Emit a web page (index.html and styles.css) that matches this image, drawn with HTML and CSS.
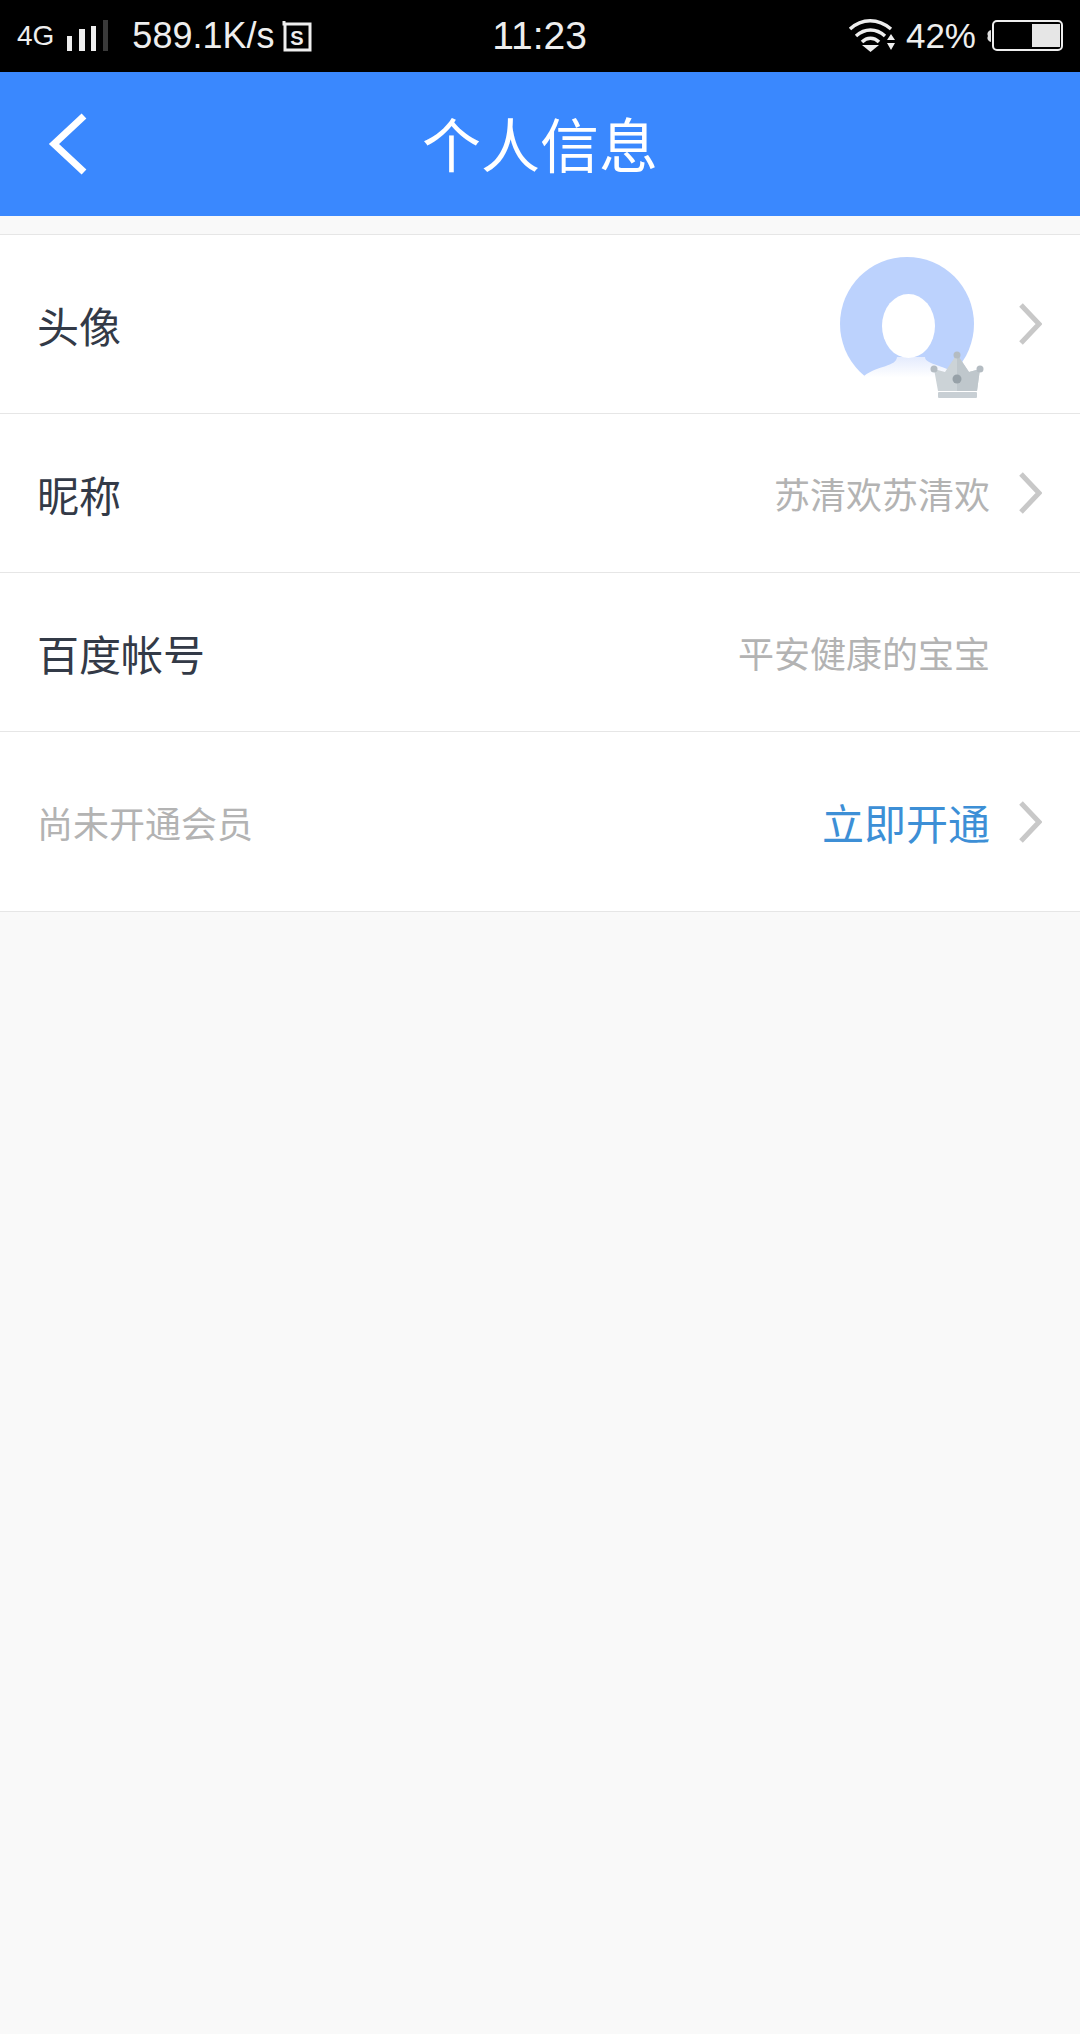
FILE: index.html
```html
<!DOCTYPE html>
<html lang="zh-CN">
<head>
    <meta charset="UTF-8">
    <title>个人信息</title>
    <link rel="stylesheet" href="styles.css">
</head>
<body>
    <div class="statusbar">
        <div class="status-left">
            <span class="net">4G</span>
            <svg class="signal" width="44" height="32" viewBox="0 0 44 32">
                <rect x="0" y="16" width="5" height="15" fill="#eee"/>
                <rect x="12" y="9" width="6" height="22" fill="#eee"/>
                <rect x="24" y="6" width="5" height="25" fill="#eee"/>
                <rect x="36" y="0" width="5" height="31" fill="#3a3a3a"/>
            </svg>
            <span class="speed">589.1K/s</span>
            <svg class="sim" width="30" height="33" viewBox="0 0 30 33">
                <path d="M2 1v3h26v26H3V4" fill="none" stroke="#eee" stroke-width="3"/>
                <text x="15" y="25" text-anchor="middle" class="sim-letter">S</text>
            </svg>
        </div>
        <div class="time">11:23</div>
        <div class="status-right">
            <svg class="wifi" width="48" height="34" viewBox="0 0 48 34">
                <path d="M2 10C14 -1 30 -1 43 10" fill="none" stroke="#eee" stroke-width="3.500"/>
                <path d="M8 17C17 9 28 9 37 17" fill="none" stroke="#eee" stroke-width="3.500"/>
                <path d="M14 23C19 18 26 18 31 23" fill="none" stroke="#eee" stroke-width="3.500"/>
                <path d="M14 26h17l-8.500 7z" fill="#eee"/>
                <path d="M43 15l4 6h-8zM39 24h8l-4 7z" fill="#eee"/>
            </svg>
            <span class="percent">42%</span>
            <svg class="battery" width="76" height="32" viewBox="0 0 76 32">
                <path d="M4 10v12a4 4 0 0 1-3-6a4 4 0 0 1 3-6z" fill="#ddd"/>
                <rect x="6" y="1" width="69" height="29" rx="4" fill="none" stroke="#eee" stroke-width="2"/>
                <rect x="45" y="4" width="28" height="23" fill="#e6e6e6"/>
            </svg>
        </div>
    </div>

    <div class="header">
        <svg class="back" width="44" height="70" viewBox="0 0 44 70">
            <path d="M37 6L7 34l30 28" fill="none" stroke="#fff" stroke-width="7"/>
        </svg>
        <h1>个人信息</h1>
    </div>

    <div class="list">
        <div class="row row-avatar">
            <span class="label">头像</span>
            <div class="avatar">
                <svg width="134" height="134" viewBox="0 0 134 134">
                    <defs>
                        <linearGradient id="bodyFade" x1="0" y1="0" x2="0" y2="1">
                            <stop offset="0" stop-color="#e4ebfd"/>
                            <stop offset="0.6" stop-color="#fff"/>
                        </linearGradient>
                    </defs>
                    <circle cx="67" cy="67" r="67" fill="#bcd2fd"/>
                    <path d="M24 119C38 108 56 110 57 100h28c0 8 22 8 36 20l-20 14H40z" fill="url(#bodyFade)"/>
                    <ellipse cx="68.500" cy="69" rx="26.500" ry="32" fill="#fff"/>
                </svg>
                <svg class="crown" width="56" height="50" viewBox="0 0 56 50">
                    <path d="M4 18l11 3L27 3l12 18 11-3-3 22H8z" fill="#ccd3d7"/>
                    <path d="M27 3l12 18 11-3-3 22H27z" fill="#bfc7cc"/>
                    <circle cx="27" cy="4" r="3.500" fill="#b4bcc2"/>
                    <circle cx="4" cy="18" r="3.500" fill="#b4bcc2"/>
                    <circle cx="50" cy="18" r="3.500" fill="#b4bcc2"/>
                    <circle cx="27" cy="28" r="4.500" fill="#97a1a8"/>
                    <rect x="8" y="41" width="39" height="6" rx="1" fill="#c8cfd4"/>
                </svg>
            </div>
            <svg class="arrow" width="24" height="44" viewBox="0 0 24 44">
                <path d="M3 3l18 19L3 41" fill="none" stroke="#c8c8c8" stroke-width="5"/>
            </svg>
        </div>

        <div class="row row-mid">
            <span class="label">昵称</span>
            <span class="value">苏清欢苏清欢</span>
            <svg class="arrow" width="24" height="44" viewBox="0 0 24 44">
                <path d="M3 3l18 19L3 41" fill="none" stroke="#c8c8c8" stroke-width="5"/>
            </svg>
        </div>

        <div class="row row-mid">
            <span class="label">百度帐号</span>
            <span class="value">平安健康的宝宝</span>
            <span class="arrow"></span>
        </div>

        <div class="row row-vip">
            <span class="label label-muted">尚未开通会员</span>
            <span class="value value-link">立即开通</span>
            <svg class="arrow" width="24" height="44" viewBox="0 0 24 44">
                <path d="M3 3l18 19L3 41" fill="none" stroke="#c8c8c8" stroke-width="5"/>
            </svg>
        </div>
    </div>
</body>
</html>
```

FILE: styles.css
```css
body {
    margin: 0;
    height: 2034px;
    overflow: hidden;
    background-color: #f9f9f9;
    font-family: "Noto Sans CJK SC", "Liberation Sans", sans-serif;
    font-weight: 400;
}

.statusbar {
    height: 72px;
    background-color: #000;
    color: #eee;
    display: grid;
    grid-template-columns: 1fr auto 1fr;
    align-items: center;
    font-family: "Liberation Sans", sans-serif;
    font-weight: 400;
}

.status-left {
    display: flex;
    align-items: center;
    padding-left: 17px;
}

.status-right {
    display: flex;
    align-items: center;
    justify-content: flex-end;
    padding-right: 17px;
}

.net {
    font-size: 28px;
}

.signal {
    margin-left: 13px;
}

.speed {
    margin-left: 21px;
    font-size: 36px;
}

.sim {
    margin-left: 8px;
}

.sim-letter {
    font-family: "Liberation Sans", sans-serif;
    font-size: 20px;
    font-weight: 700;
    fill: #eee;
}

.time {
    font-size: 39px;
    margin-right: 1px;
}

.percent {
    margin-left: 10px;
    font-size: 35px;
}

.battery {
    margin-left: 11px;
}

.header {
    height: 144px;
    background-color: #3a88fe;
    position: relative;
    display: flex;
    align-items: center;
    justify-content: center;
}

.header h1 {
    margin: 0;
    color: #fff;
    font-size: 59px;
    font-weight: 400;
    line-height: 1;
    margin-bottom: 3px;
}

.back {
    position: absolute;
    left: 47px;
    top: 38px;
}

.list {
    margin-top: 18px;
    background-color: #fff;
    border-top: 1px solid #e6e6e6;
}

.row {
    display: flex;
    align-items: center;
    padding: 0 38px 0 37px;
    border-bottom: 1px solid #e6e6e6;
    box-sizing: border-box;
}

.row-avatar {
    height: 179px;
}

.row-mid {
    height: 159px;
}

.row-vip {
    height: 180px;
}

.label {
    flex: 1;
    font-size: 42px;
    color: #333a47;
}

.label-muted {
    font-size: 36px;
    color: #b3b3b3;
}

.value {
    font-size: 36px;
    color: #b3b3b3;
}

.value-link {
    font-size: 42px;
    color: #3d8fd6;
}

.arrow {
    width: 24px;
    height: 44px;
    margin-left: 28px;
}

.avatar {
    position: relative;
    width: 134px;
    height: 134px;
    margin-right: 16px;
}

.avatar svg {
    display: block;
}

.crown {
    position: absolute;
    left: 90px;
    top: 94px;
}
```
